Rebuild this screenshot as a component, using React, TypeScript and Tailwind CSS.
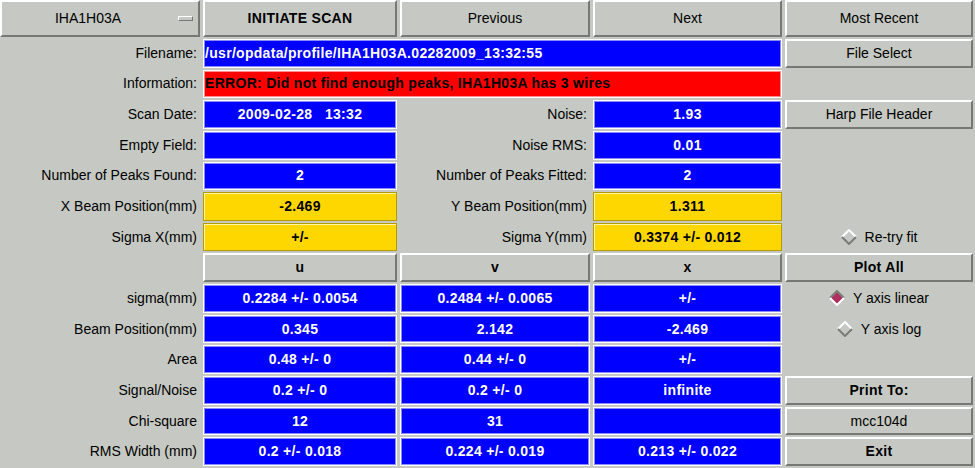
import type { ReactNode } from 'react'

const BG = 'bg-[#c6c9c3]'

function Label({ children }: { children?: ReactNode }) {
	return (
		<div className="flex items-center justify-end pr-[3px] text-[14px] text-black whitespace-nowrap">
			{children}
		</div>
	)
}

function Empty() {
	return <div />
}

type Tone = 'blue' | 'yellow' | 'red'

const tones: Record<Tone, string> = {
	blue: 'bg-[#0000ff] text-white border-white shadow-[inset_0_0_0_1px_#8a8aff]',
	yellow: 'bg-[#ffd700] text-black border-[#b39b00] shadow-[inset_1px_1px_0_#fff4a8]',
	red: 'bg-[#ff0000] text-black border-white shadow-[inset_0_0_0_1px_#ff8c8c]',
}

function Field({
	children,
	tone = 'blue',
	left,
	wide,
}: {
	children?: ReactNode
	tone?: Tone
	left?: boolean
	wide?: boolean
}) {
	return (
		<div
			className={`flex items-center border text-[14px] font-bold tracking-[0.3px] whitespace-pre overflow-hidden ${tones[tone]} ${
				left ? 'justify-start pl-[1px]' : 'justify-center'
			} ${wide ? 'col-span-3' : ''}`}
		>
			{children}
		</div>
	)
}

function Btn({ children, bold }: { children?: ReactNode; bold?: boolean }) {
	return (
		<div
			className={`flex items-center justify-center ${BG} border-2 border-white border-b-[#767874] border-r-[#767874] text-[14px] text-black ${
				bold ? 'font-bold tracking-[0.3px]' : ''
			}`}
		>
			{children}
		</div>
	)
}

function Diamond({ on }: { on?: boolean }) {
	const light = '#ffffff'
	const dark = '#7a7c78'
	return (
		<svg width="16" height="16" viewBox="0 0 16 16" className="shrink-0">
			<polygon points="8,2 14,8 8,14 2,8" fill={on ? '#b03060' : '#c6c9c3'} />
			<polyline points="1,8 8,1 15,8" fill="none" stroke={on ? dark : light} strokeWidth="2" />
			<polyline points="15,8 8,15 1,8" fill="none" stroke={on ? light : dark} strokeWidth="2" />
		</svg>
	)
}

function Radio({ label, on }: { label: string; on?: boolean }) {
	return (
		<div className="flex items-center justify-center gap-[8px] text-[14px] text-black">
			<Diamond on={on} />
			<span>{label}</span>
		</div>
	)
}

function ScanSelect() {
	return (
		<div
			className={`flex items-center ${BG} border-2 border-white border-b-[#767874] border-r-[#767874] text-[14px] text-black`}
		>
			<span className="flex-1 text-center">IHA1H03A</span>
			<span className="ml-[4px] mr-[5px] h-[5px] w-[15px] border border-white border-b-[#767874] border-r-[#767874] bg-[#c6c9c3]" />
		</div>
	)
}

export default function App() {
	return (
		<div
			className={`h-[468px] w-[975px] ${BG} font-['Liberation_Sans',Arial,Helvetica,sans-serif] grid grid-cols-[200px_194px_190px_189px_188px] grid-rows-[37px_repeat(14,minmax(0,1fr))] gap-x-[3px] gap-y-[2px] pb-[2px]`}
		>
			{/* Row 0: toolbar */}
			<ScanSelect />
			<Btn bold>INITIATE SCAN</Btn>
			<Btn>Previous</Btn>
			<Btn>Next</Btn>
			<Btn>Most Recent</Btn>

			{/* File info */}
			<Label>Filename:</Label>
			<Field wide left>
				/usr/opdata/profile/IHA1H03A.02282009_13:32:55
			</Field>
			<Btn>File Select</Btn>

			<Label>Information:</Label>
			<Field wide left tone="red">
				ERROR: Did not find enough peaks, IHA1H03A has 3 wires
			</Field>
			<Empty />

			<Label>Scan Date:</Label>
			<Field>2009-02-28   13:32</Field>
			<Label>Noise:</Label>
			<Field>1.93</Field>
			<Btn>Harp File Header</Btn>

			<Label>Empty Field:</Label>
			<Field />
			<Label>Noise RMS:</Label>
			<Field>0.01</Field>
			<Empty />

			<Label>Number of Peaks Found:</Label>
			<Field>2</Field>
			<Label>Number of Peaks Fitted:</Label>
			<Field>2</Field>
			<Empty />

			<Label>X Beam Position(mm)</Label>
			<Field tone="yellow">-2.469</Field>
			<Label>Y Beam Position(mm)</Label>
			<Field tone="yellow">1.311</Field>
			<Empty />

			<Label>Sigma X(mm)</Label>
			<Field tone="yellow">+/-</Field>
			<Label>Sigma Y(mm)</Label>
			<Field tone="yellow">0.3374 +/- 0.012</Field>
			<Radio label="Re-try fit" />

			{/* Per-wire table */}
			<Empty />
			<Btn bold>u</Btn>
			<Btn bold>v</Btn>
			<Btn bold>x</Btn>
			<Btn bold>Plot All</Btn>

			<Label>sigma(mm)</Label>
			<Field>0.2284 +/- 0.0054</Field>
			<Field>0.2484 +/- 0.0065</Field>
			<Field>+/-</Field>
			<Radio label="Y axis linear" on />

			<Label>Beam Position(mm)</Label>
			<Field>0.345</Field>
			<Field>2.142</Field>
			<Field>-2.469</Field>
			<Radio label="Y axis log" />

			<Label>Area</Label>
			<Field>0.48 +/- 0</Field>
			<Field>0.44 +/- 0</Field>
			<Field>+/-</Field>
			<Empty />

			<Label>Signal/Noise</Label>
			<Field>0.2 +/- 0</Field>
			<Field>0.2 +/- 0</Field>
			<Field>infinite</Field>
			<Btn bold>Print To:</Btn>

			<Label>Chi-square</Label>
			<Field>12</Field>
			<Field>31</Field>
			<Field />
			<Btn>mcc104d</Btn>

			<Label>RMS Width (mm)</Label>
			<Field>0.2 +/- 0.018</Field>
			<Field>0.224 +/- 0.019</Field>
			<Field>0.213 +/- 0.022</Field>
			<Btn bold>Exit</Btn>
		</div>
	)
}
